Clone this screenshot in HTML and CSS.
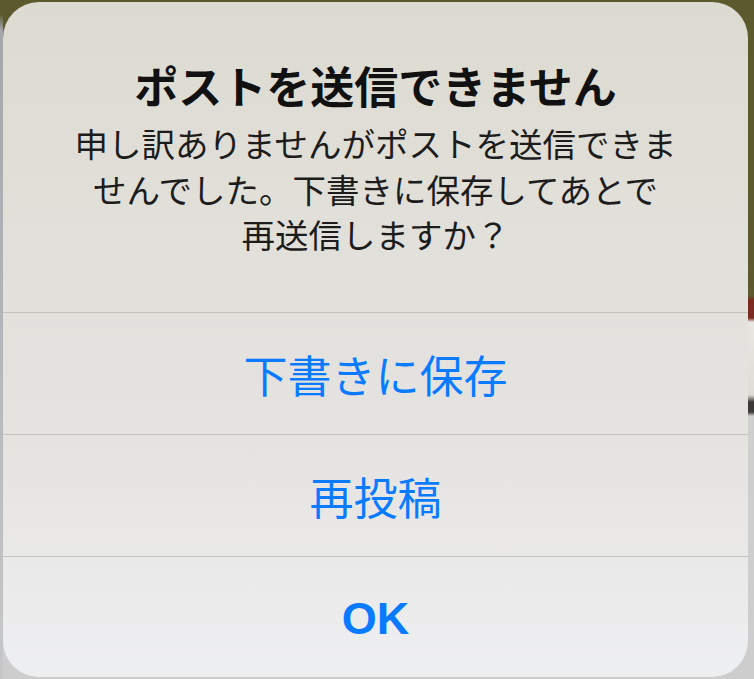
FILE: index.html
```html
<!DOCTYPE html>
<html lang="ja">
<head>
  <meta charset="UTF-8">
  <meta name="viewport" content="width=device-width, initial-scale=1.0">
  <title>ポストを送信できません</title>
  <link rel="stylesheet" href="styles.css">
</head>
<body>
  <div class="alert">
    <div class="alert-head">
      <h1 class="alert-title">ポストを送信できません</h1>
      <p class="alert-msg">申し訳ありませんがポストを送信できま<br>せんでした。下書きに保存してあとで<br>再送信しますか？</p>
    </div>
    <button class="alert-bt">下書きに保存</button>
    <button class="alert-bt">再投稿</button>
    <button class="alert-bt ok">OK</button>
  </div>
</body>
</html>
```

FILE: styles.css
```css
html, body{
  margin: 0; height: 100%;
}
body{
  width: 754px; height: 679px; box-sizing: border-box;
  padding: 2px 6px 2px 3px;
  background:
    linear-gradient(#5c5a2e 0 14px, #a3a7aa 30px, #c6c7c8 100%) left top / 3px 100% no-repeat,
    linear-gradient(#5b592d 0 296px, #7a2c22 300px, #7a2c22 318px, #e9e7e2 322px, #dedcd6 395px, #3b3a36 402px, #3b3a36 412px, #cfcfcf 416px, #cdcdcd 100%);
  font-family: "Noto Sans CJK JP", "Noto Sans", sans-serif;
}
.alert{
  height: 100%; border-radius: 36px; overflow: hidden;
  display: flex; flex-direction: column;
  background: linear-gradient(#dcdbd1 0%, #e3e1dc 45%, #e5e3e0 65%, #eeeff1 100%);
}
.alert-head{
  height: 311px; box-sizing: border-box; flex: none;
  padding-top: 57px; text-align: center;
  border-bottom: 1px solid #c3c2bd;
}
.alert-title{
  margin: 0; font-size: 44px; line-height: 52px; font-weight: 700;
  color: #111;
}
.alert-msg{
  margin: 9px 0 0; font-size: 33.5px; line-height: 45.5px;
  color: #1c1c1c;
}
.alert-bt{
  flex: none; height: 122px; border: 0; padding: 0; margin: 0;
  background: transparent; color: #0a7bff;
  font-family: inherit; font-size: 44px;
  border-bottom: 1px solid #c3c2bd;
}
.alert-bt.ok{
  flex: 1; height: auto;
  border-bottom: 0; font-weight: 700; padding-top: 4px;
  font-family: "Liberation Sans", Arial, sans-serif; font-size: 45px;
}
```
